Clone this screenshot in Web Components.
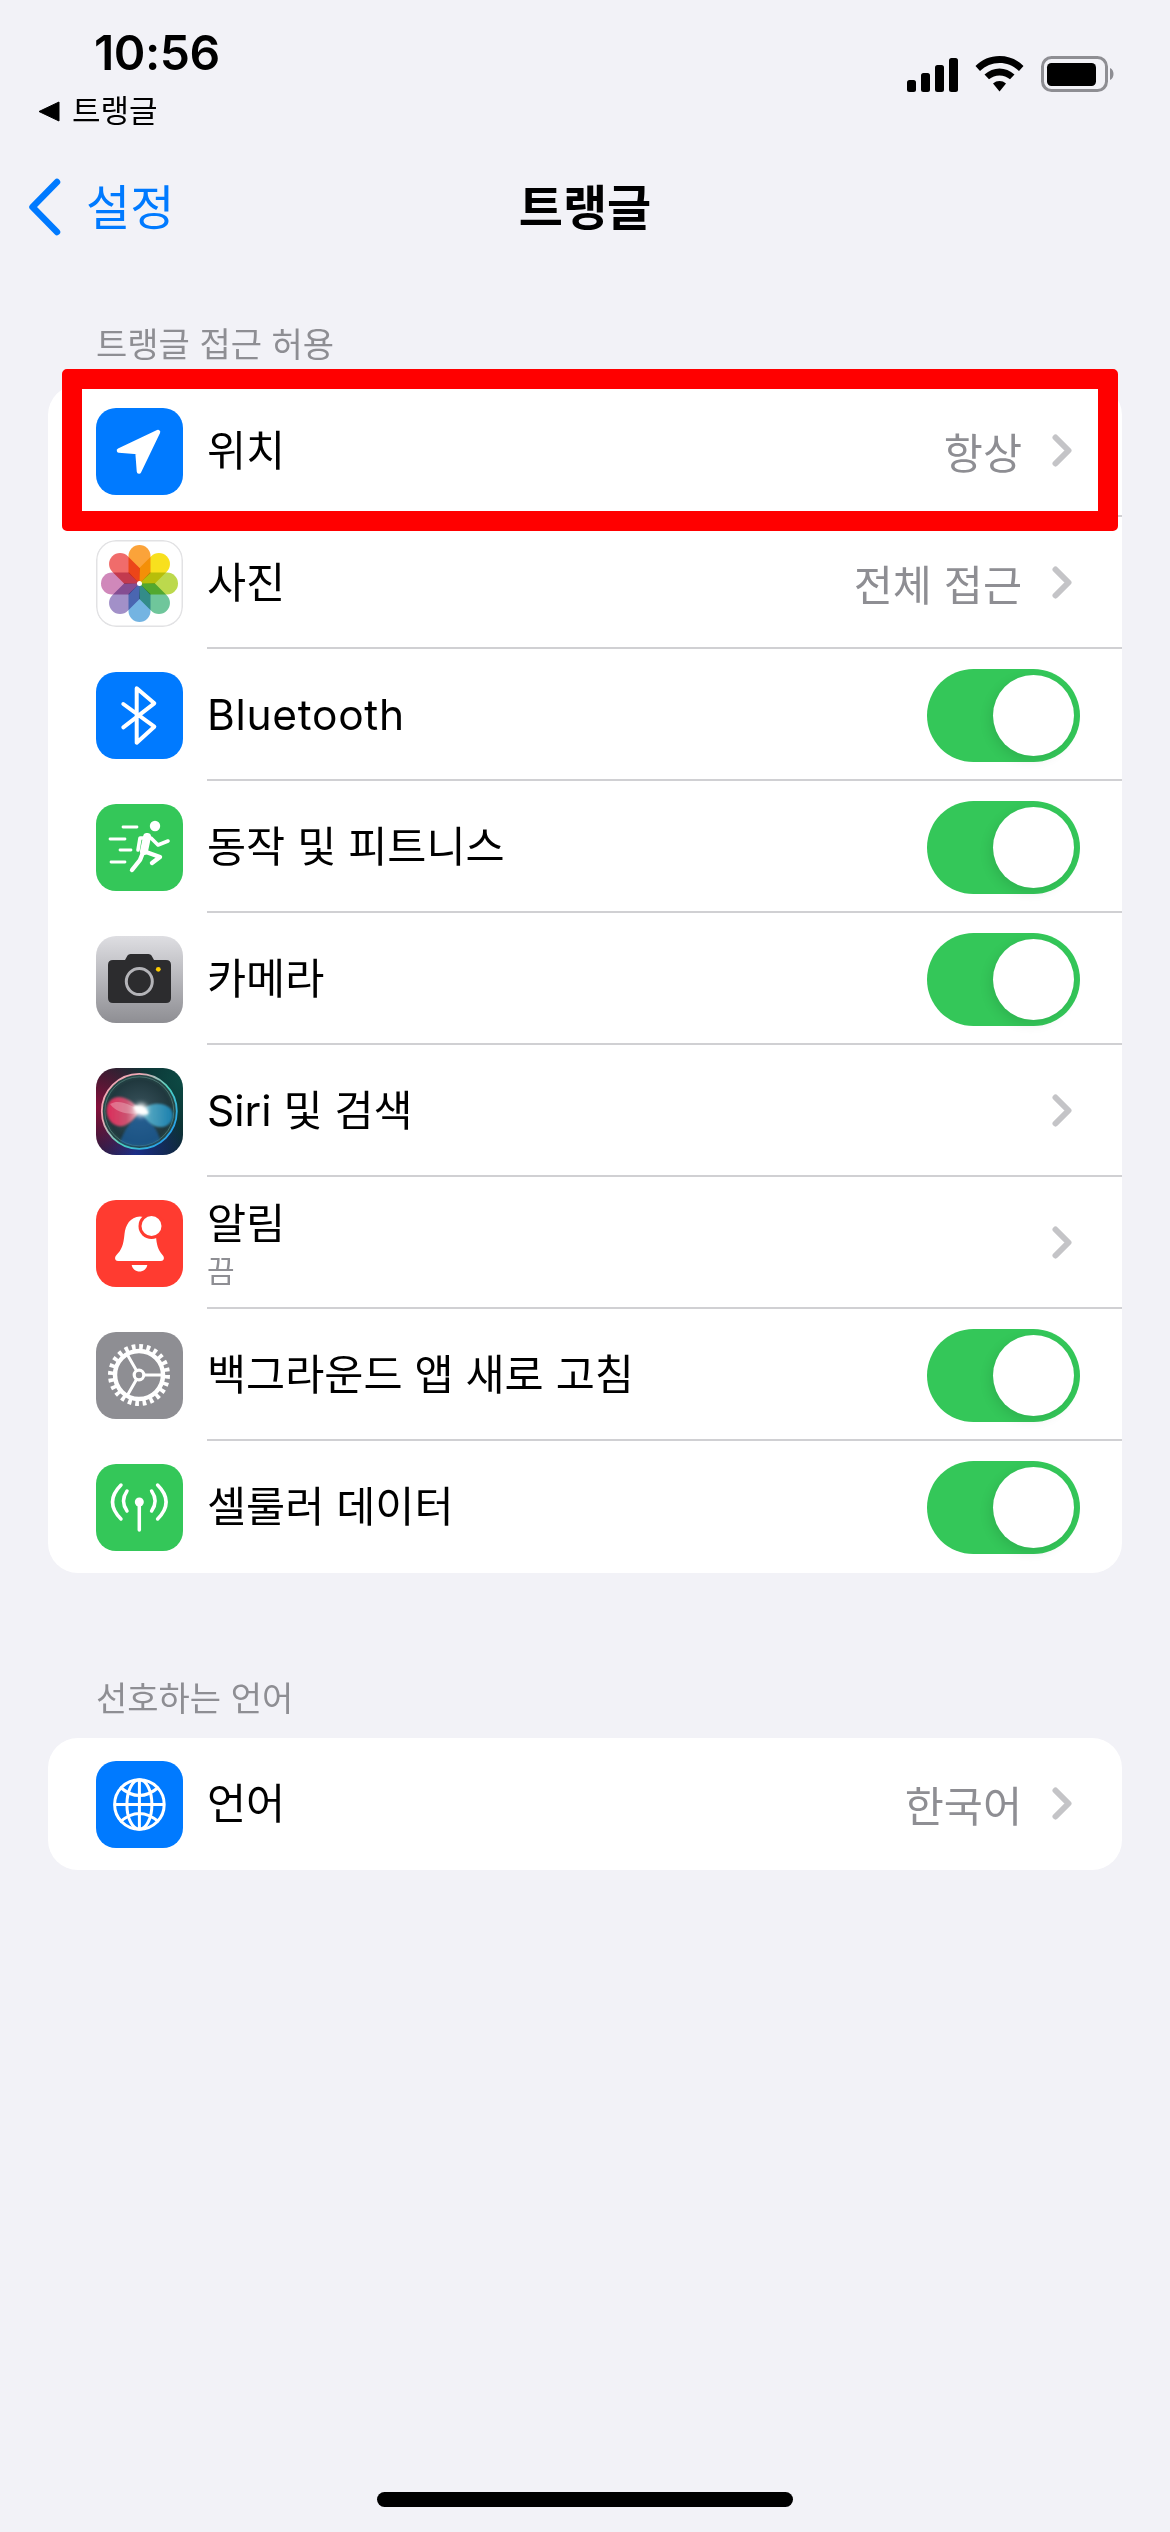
<!DOCTYPE html>
<html lang="ko">
<head>
<meta charset="utf-8">
<title>트랭글</title>
<style>
    html, body {
        margin: 0;
        background-color: #f2f2f7;
    }
    body {
        display: flex;
        flex-direction: column;
        height: 2532px;
        overflow: hidden;
        color: #000;
        font-family: Inter, "Noto Sans CJK KR", sans-serif;
    }
</style>
</head>
<body>
    <status-bar time="10:56" back="트랭글"></status-bar>
    <nav-bar back="설정" title="트랭글"></nav-bar>

    <settings-section label="트랭글 접근 허용">
        <settings-row label="위치" value="항상" chevron highlight><app-icon slot="icon" name="location"></app-icon></settings-row>
        <settings-row label="사진" value="전체 접근" chevron><app-icon slot="icon" name="photos"></app-icon></settings-row>
        <settings-row label="Bluetooth" toggle style="letter-spacing: 0.7px"><app-icon slot="icon" name="bluetooth"></app-icon></settings-row>
        <settings-row label="동작 및 피트니스" toggle><app-icon slot="icon" name="fitness"></app-icon></settings-row>
        <settings-row label="카메라" toggle><app-icon slot="icon" name="camera"></app-icon></settings-row>
        <settings-row label="Siri 및 검색" chevron><app-icon slot="icon" name="siri"></app-icon></settings-row>
        <settings-row label="알림" sub="끔" chevron><app-icon slot="icon" name="bell"></app-icon></settings-row>
        <settings-row label="백그라운드 앱 새로 고침" toggle><app-icon slot="icon" name="gear"></app-icon></settings-row>
        <settings-row label="셀룰러 데이터" toggle last><app-icon slot="icon" name="cellular"></app-icon></settings-row>
    </settings-section>

    <settings-section label="선호하는 언어" class="second">
        <settings-row label="언어" value="한국어" chevron last><app-icon slot="icon" name="globe"></app-icon></settings-row>
    </settings-section>

    <home-indicator></home-indicator>

<script>
const fontStack = 'Inter, "Noto Sans CJK KR", sans-serif';

class StatusBar extends HTMLElement {
    connectedCallback() {
        const root = this.attachShadow({mode: 'open'});
        root.innerHTML = `
            <style>
                :host {
                    display: flex;
                    justify-content: space-between;
                    height: 147px;
                    font-family: ${fontStack};
                }
                .left {
                    display: flex;
                    flex-direction: column;
                    padding: 23px 0 0 38px;
                }
                .time {
                    font-size: 48px;
                    line-height: 60px;
                    font-weight: 600;
                    margin-left: 56px;
                    letter-spacing: -0.5px;
                }
                .back {
                    display: flex;
                    align-items: center;
                    gap: 12px;
                    font-size: 31px;
                    line-height: 40px;
                    margin-top: 8px;
                }
                .back svg { display: block; }
                .right {
                    display: flex;
                    align-items: flex-start;
                    gap: 17px;
                    padding: 56px 56px 0 0;
                }
                .right svg { display: block; }
            </style>
            <div class="left">
                <div class="time">${this.getAttribute('time')}</div>
                <div class="back">
                    <svg width="22" height="21" viewBox="0 0 22 21"><path d="M21 1 V20 L1 10.5 Z" fill="#000" stroke="#000" stroke-width="1" stroke-linejoin="round"/></svg>
                    <span>${this.getAttribute('back')}</span>
                </div>
            </div>
            <div class="right">
                <svg width="51" height="36" viewBox="0 0 51 36" fill="#000">
                    <rect x="0" y="24" width="9" height="12" rx="2.5"/>
                    <rect x="14" y="17" width="9" height="19" rx="2.5"/>
                    <rect x="28" y="9" width="9" height="27" rx="2.5"/>
                    <rect x="42" y="2" width="9" height="34" rx="2.5"/>
                </svg>
                <svg width="49" height="36" viewBox="0 0 49 36" fill="#000">
                    <path d="M24.5 0 C15 0 7 3.5 0.5 10 L5 15 C10.5 9.8 17 7 24.5 7 C32 7 38.5 9.8 44 15 L48.5 10 C42 3.5 34 0 24.5 0 Z"/>
                    <path d="M24.5 12.5 C19 12.5 14 14.5 9.5 18.5 L14 23.3 C17 20.8 20.5 19.5 24.5 19.5 C28.5 19.5 32 20.8 35 23.3 L39.5 18.5 C35 14.5 30 12.5 24.5 12.5 Z"/>
                    <path d="M24.5 25 C22 25 20 25.8 18 27.5 L24.5 35.5 L31 27.5 C29 25.8 27 25 24.5 25 Z"/>
                </svg>
                <svg width="73" height="36" viewBox="0 0 73 36">
                    <rect x="1.5" y="1.5" width="64" height="33" rx="9" fill="none" stroke="#8e8e93" stroke-width="3"/>
                    <rect x="6" y="7" width="49" height="23" rx="4.5" fill="#000"/>
                    <path d="M69 12 C71.5 13 72.5 15.5 72.5 18 C72.5 20.5 71.5 23 69 24 Z" fill="#8e8e93"/>
                </svg>
            </div>
        `;
    }
}

class NavBar extends HTMLElement {
    connectedCallback() {
        const root = this.attachShadow({mode: 'open'});
        root.innerHTML = `
            <style>
                :host {
                    display: grid;
                    grid-template-columns: 1fr auto 1fr;
                    align-items: center;
                    height: 114px;
                    font-family: ${fontStack};
                }
                .back {
                    display: flex;
                    align-items: center;
                    gap: 25px;
                    padding-left: 28px;
                    color: #007aff;
                    font-size: 48px;
                }
                .back svg { display: block; margin-top: 5px; }
                .title {
                    font-size: 48px;
                    font-weight: 700;
                }
            </style>
            <div class="back">
                <svg width="33" height="58" viewBox="0 0 33 58"><path d="M29 4 L4.5 29 L29 54" fill="none" stroke="#007aff" stroke-width="6.5" stroke-linecap="round" stroke-linejoin="round"/></svg>
                <span>${this.getAttribute('back')}</span>
            </div>
            <div class="title">${this.getAttribute('title')}</div>
            <div></div>
        `;
    }
}

class SettingsSection extends HTMLElement {
    connectedCallback() {
        const root = this.attachShadow({mode: 'open'});
        root.innerHTML = `
            <style>
                :host {
                    display: block;
                    padding: 0 48px;
                    font-family: ${fontStack};
                }
                :host(.second) { margin-top: 104px; }
                .label {
                    padding: 62px 48px 0;
                    height: 62px;
                    font-size: 34px;
                    line-height: 44px;
                    color: #8e8e93;
                }
                :host(.second) .label { padding-top: 0; height: 61px; }
                .card {
                    background-color: #fff;
                    border-radius: 30px;
                }
            </style>
            <div class="label">${this.getAttribute('label')}</div>
            <div class="card"><slot></slot></div>
        `;
    }
}

class SettingsRow extends HTMLElement {
    connectedCallback() {
        const root = this.attachShadow({mode: 'open'});
        const value = this.getAttribute('value');
        const sub = this.getAttribute('sub');
        root.innerHTML = `
            <style>
                :host {
                    display: flex;
                    position: relative;
                    align-items: center;
                    height: 132px;
                    padding-left: 48px;
                    font-family: ${fontStack};
                }
                .content {
                    flex: 1;
                    align-self: stretch;
                    display: flex;
                    align-items: center;
                    margin-left: 24px;
                    padding-right: 42px;
                    border-bottom: 2px solid #d0d0d3;
                    min-width: 0;
                }
                :host([last]) .content { border-bottom: 2px solid transparent; }
                .text { flex: 1; display: flex; flex-direction: column; padding-top: 2px; }
                .label { font-size: 42.5px; line-height: 52px; }
                .sub { font-size: 30px; line-height: 30px; color: #8e8e93; margin: 6px 0 2px; }
                .value { font-size: 42.5px; color: #8e8e93; }
                .chevron { display: block; margin: 0 8px 0 30px; }
                .highlight {
                    position: absolute;
                    top: -16px;
                    left: 14px;
                    right: 4px;
                    bottom: -14px;
                    border: 20px solid #ff0000;
                    border-radius: 5px;
                    pointer-events: none;
                }
            </style>
            <slot name="icon"></slot>
            <div class="content">
                <div class="text">
                    <div class="label">${this.getAttribute('label')}</div>
                    ${sub ? `<div class="sub">${sub}</div>` : ''}
                </div>
                ${value ? `<div class="value">${value}</div>` : ''}
                ${this.hasAttribute('chevron') ? `<svg class="chevron" width="20" height="33" viewBox="0 0 20 33"><path d="M3.5 3.5 L16.5 16.5 L3.5 29.5" fill="none" stroke="#c4c4c7" stroke-width="6" stroke-linecap="round" stroke-linejoin="round"/></svg>` : ''}
                ${this.hasAttribute('toggle') ? `<toggle-switch></toggle-switch>` : ''}
            </div>
            ${this.hasAttribute('highlight') ? `<div class="highlight"></div>` : ''}
        `;
    }
}

class ToggleSwitch extends HTMLElement {
    connectedCallback() {
        const root = this.attachShadow({mode: 'open'});
        root.innerHTML = `
            <style>
                :host {
                    display: flex;
                    justify-content: flex-end;
                    width: 153px;
                    height: 93px;
                    padding: 6px;
                    box-sizing: border-box;
                    margin-top: 2px;
                    background-color: #34c759;
                    border-radius: 47px;
                }
                .knob {
                    width: 81px;
                    height: 81px;
                    border-radius: 50%;
                    background-color: #fff;
                    box-shadow: -3px 4px 12px rgba(0, 0, 0, 0.1);
                }
            </style>
            <div class="knob"></div>
        `;
    }
}

const petal = 'M43.5 43.5 L32.5 33 V16 A11 11 0 0 1 54.5 16 V33 Z';
const petalColors = ['#fba33a', '#f8e01e', '#bcd94d', '#6fc69b', '#74b4e2', '#a290c8', '#d088ba', '#f06c6b'];

const iconArt = {
    location: {
        bg: '#007aff',
        svg: `<path d="M62 24 L23 42.5 L41.5 44 L43 63.5 Z" fill="#fff" stroke="#fff" stroke-width="4.5" stroke-linejoin="round"/>`
    },
    photos: {
        bg: '#fff',
        svg: `<rect x="0.75" y="0.75" width="85.5" height="85.5" rx="19.5" fill="none" stroke="#e2e2e4" stroke-width="1.5"/>
            <g style="isolation:isolate">
            ${petalColors.map((c, i) => `<path d="${petal}" fill="${c}" style="mix-blend-mode:multiply" transform="rotate(${i * 45} 43.5 43.5)"/>`).join('')}
            </g>
            <circle cx="43.5" cy="43.5" r="2.5" fill="#fff"/>`
    },
    bluetooth: {
        bg: '#007aff',
        svg: `<path d="M27.3 32 L58.3 54.7 L40.7 70.7 V16.3 L58.3 31.3 L27.3 55.3" fill="none" stroke="#fff" stroke-width="4" stroke-linecap="round" stroke-linejoin="round"/>`
    },
    fitness: {
        bg: '#34c759',
        svg: `<circle cx="59" cy="22" r="5.2" fill="#fff"/>
            <g fill="none" stroke="#fff" stroke-linecap="round" stroke-linejoin="round">
                <path d="M27 23 H41 M14 35 H29 M24 46 H35 M15 58 H29" stroke-width="2.8"/>
                <path d="M42 46 L44 34 H55 L62 41 L72 37" stroke-width="3.6"/>
                <path d="M51 33 L48 47" stroke-width="8"/>
                <path d="M50 48 L64 53 L56 59" stroke-width="4.4"/>
                <path d="M48 46 L44 56 L36 66" stroke-width="4.4"/>
            </g>`
    },
    camera: {
        bg: 'linear-gradient(#dedee2, #8e8e93)',
        svg: `<path d="M17 24 H29 L31.5 19.5 Q32.5 18 34.5 18 H52.5 Q54.5 18 55.5 19.5 L58 24 H70 Q75 24 75 29 V62 Q75 67 70 67 H17 Q12 67 12 62 V29 Q12 24 17 24 Z" fill="#2c2c2e"/>
            <circle cx="43.3" cy="45.5" r="13" fill="none" stroke="#b4b4b8" stroke-width="3"/>
            <circle cx="62.3" cy="33.3" r="2.4" fill="#ffcc00"/>`
    },
    siri: {
        bg: 'radial-gradient(circle at 0% 45%, #86103c 0, rgba(134,16,60,0) 62%), radial-gradient(circle at 45% 100%, #1b2f8a 0, rgba(27,47,138,0) 55%), radial-gradient(circle at 100% 15%, #0c4a44 0, rgba(12,74,68,0) 85%), #0d1a24',
        svg: `<defs>
                <linearGradient id="ring" x1="0.1" y1="0.5" x2="0.7" y2="1">
                    <stop offset="0" stop-color="#f0a8b4"/><stop offset="0.5" stop-color="#4fd6c0"/><stop offset="1" stop-color="#2aa5ea"/>
                </linearGradient>
                <radialGradient id="sphere" cx="0.5" cy="0.5" r="0.55">
                    <stop offset="0" stop-color="#3c5660"/><stop offset="0.75" stop-color="#20383e"/><stop offset="1" stop-color="#2e5850"/>
                </radialGradient>
                <linearGradient id="pink" x1="0" y1="0.5" x2="1" y2="0.5">
                    <stop offset="0" stop-color="#f02c5e"/><stop offset="0.6" stop-color="#dd5374"/><stop offset="1" stop-color="#f3c3cc"/>
                </linearGradient>
                <linearGradient id="blue" x1="0" y1="0.5" x2="1" y2="0.5">
                    <stop offset="0" stop-color="#6fc4d8"/><stop offset="1" stop-color="#1a8cc2"/>
                </linearGradient>
                <filter id="soft" x="-30%" y="-30%" width="160%" height="160%"><feGaussianBlur stdDeviation="0.8"/></filter>
                <filter id="glow" x="-100%" y="-100%" width="300%" height="300%"><feGaussianBlur stdDeviation="2.4"/></filter>
            </defs>
            <circle cx="43.3" cy="43.3" r="37.5" fill="url(#sphere)" stroke="url(#ring)" stroke-width="1.8"/>
            <circle cx="43.3" cy="43.3" r="34.5" fill="none" stroke="#7fb8b0" stroke-width="0.8" opacity="0.5"/>
            <path d="M24 74 C28 62 36 52 44 44 C54 52 62 62 64 72 C54 80 34 80 24 74 Z" fill="#1a68b4" opacity="0.6" filter="url(#soft)"/>
            <path d="M44 43 C36 30 20 24 13 34 C8 42 11 55 22 58 C30 60 38 52 44 43 Z" fill="url(#pink)" opacity="0.9" filter="url(#soft)"/>
            <path d="M14 36 C24 30 36 38 48 44 C38 47 22 47 14 36 Z" fill="#f7d3da" opacity="0.35"/>
            <path d="M44 43 C52 35 66 33 74 40 C80 47 76 58 66 59 C56 60 50 52 44 43 Z" fill="url(#blue)" opacity="0.85" filter="url(#soft)"/>
            <circle cx="45" cy="42" r="6.5" fill="#fff" filter="url(#glow)"/>
            <ellipse cx="45" cy="42" rx="8" ry="3" fill="#fff" transform="rotate(25 45 42)" filter="url(#soft)"/>`
    },
    bell: {
        bg: '#ff3b30',
        svg: `<path d="M44 16.5 C34 17 29.5 25 28.5 34 C27.5 45 25.5 50 20.5 55 C18 57.5 19 61 22 61 H65 C68 61 69 57.5 66.5 55 C62 50 60.5 44 60 36 C59 26 53 17 44 16.5 Z" fill="#fff"/>
            <path d="M35.7 65 H51.3 C50.5 69 47.5 71.5 43.5 71.5 C39.5 71.5 36.5 69 35.7 65 Z" fill="#fff"/>
            <circle cx="55.5" cy="26" r="13" fill="#ff3b30"/>
            <circle cx="55.5" cy="26" r="10" fill="#fff"/>`
    },
    gear: {
        bg: '#8e8e93',
        svg: `<g fill="none" stroke="#fff">
                <circle cx="43" cy="43" r="28" stroke-width="6" stroke-dasharray="3.665 3.665"/>
                <circle cx="43" cy="43" r="24" stroke-width="4.5"/>
                <circle cx="43" cy="43" r="4.8" stroke-width="3.2"/>
                <path d="M47.8 43 H67 M40.6 47.2 L31 64 M40.6 38.8 L31 22" stroke-width="3"/>
            </g>`
    },
    cellular: {
        bg: '#34c759',
        svg: `<circle cx="43.3" cy="38" r="4.5" fill="#fff"/>
            <g fill="none" stroke="#fff" stroke-width="3.5" stroke-linecap="round">
                <path d="M43.3 40 V66"/>
                <path d="M31 27 Q24 37 31 47 M25 21 Q8 38 25 55 M55.6 27 Q62.6 37 55.6 47 M61.6 21 Q78.6 38 61.6 55"/>
            </g>`
    },
    globe: {
        bg: '#007aff',
        svg: `<g fill="none" stroke="#fff" stroke-width="3">
                <circle cx="43.4" cy="43.5" r="24.8"/>
                <ellipse cx="43.4" cy="43.5" rx="12.5" ry="24.8"/>
                <path d="M43.4 18.7 V68.3 M18.6 43.5 H68.2 M24 26 Q43.4 43 62.8 26 M24 61 Q43.4 44 62.8 61"/>
            </g>`
    }
};

class AppIcon extends HTMLElement {
    connectedCallback() {
        const art = iconArt[this.getAttribute('name')];
        const root = this.attachShadow({mode: 'open'});
        root.innerHTML = `
            <style>
                :host {
                    display: block;
                    flex: none;
                    width: 87px;
                    height: 87px;
                    border-radius: 20px;
                    overflow: hidden;
                    background: ${art.bg};
                }
                svg { display: block; }
            </style>
            <svg width="87" height="87" viewBox="0 0 87 87">${art.svg}</svg>
        `;
    }
}

class HomeIndicator extends HTMLElement {
    connectedCallback() {
        const root = this.attachShadow({mode: 'open'});
        root.innerHTML = `
            <style>
                :host {
                    display: flex;
                    justify-content: center;
                    margin-top: auto;
                    padding-bottom: 25px;
                }
                div {
                    width: 416px;
                    height: 15px;
                    border-radius: 8px;
                    background-color: #000;
                }
            </style>
            <div></div>
        `;
    }
}

customElements.define('status-bar', StatusBar);
customElements.define('nav-bar', NavBar);
customElements.define('settings-section', SettingsSection);
customElements.define('settings-row', SettingsRow);
customElements.define('toggle-switch', ToggleSwitch);
customElements.define('app-icon', AppIcon);
customElements.define('home-indicator', HomeIndicator);
</script>
</body>
</html>
